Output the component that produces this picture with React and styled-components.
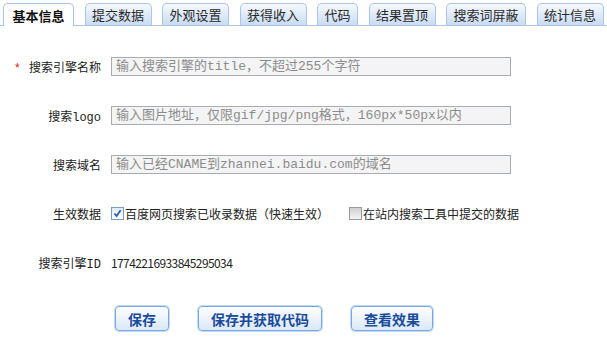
import React from "react";
import styled, { createGlobalStyle } from "styled-components";

const GlobalStyle = createGlobalStyle`
    body {
        margin: 0;
        background: #fff;
        font-family: "Noto Sans CJK SC", sans-serif;
        color: #333;
    }
`;

const tabs = ["基本信息", "提交数据", "外观设置", "获得收入", "代码", "结果置顶", "搜索词屏蔽", "统计信息"];

const CheckIcon = () => (
    <svg width="9" height="9" viewBox="0 0 9 9">
        <path d="M1.5 4.5 L3.6 7 L7.6 1.2" fill="none" stroke="#2a5fc1" strokeWidth="1.8" />
    </svg>
);

export default function App() {
    return (
        <Page>
            <GlobalStyle />
            <TabBar>
                {tabs.map((t, i) => (
                    <Tab key={t} active={i === 0}>{t}</Tab>
                ))}
            </TabBar>
            <Form>
                <Label><Star>*</Star>搜索引擎名称</Label>
                <Field placeholder="输入搜索引擎的title，不超过255个字符" />

                <Label>搜索logo</Label>
                <Field placeholder="输入图片地址，仅限gif/jpg/png格式，160px*50px以内" />

                <Label>搜索域名</Label>
                <Field placeholder="输入已经CNAME到zhannei.baidu.com的域名" />

                <Label>生效数据</Label>
                <Checks>
                    <CheckItem>
                        <Box checked><CheckIcon /></Box>
                        百度网页搜索已收录数据（快速生效）
                    </CheckItem>
                    <CheckItem>
                        <Box />
                        在站内搜索工具中提交的数据
                    </CheckItem>
                </Checks>

                <Label>搜索引擎ID</Label>
                <IdValue>17742216933845295034</IdValue>
            </Form>
            <Buttons>
                <Button>保存</Button>
                <Button>保存并获取代码</Button>
                <Button>查看效果</Button>
            </Buttons>
        </Page>
    );
}

const Page = styled.div`
    width: 607px;
    height: 356px;
    overflow: hidden;
`;

const TabBar = styled.div`
    display: flex;
    align-items: flex-end;
    gap: 10.5px;
    padding: 3px 0 0 3px;
    height: 22px;
    border-bottom: 1px solid #a9c6e8;
`;

const Tab = styled.div`
    display: flex;
    align-items: center;
    justify-content: center;
    box-sizing: border-box;
    height: ${(props) => (props.active ? "23px" : "22px")};
    margin-bottom: ${(props) => (props.active ? "-1px" : "0")};
    padding: ${(props) => (props.active ? "0 8.5px" : "0 6.5px")};
    border: 1px solid #a9c6e8;
    border-bottom: none;
    border-radius: 5px 5px 0 0;
    background: ${(props) => (props.active ? "#fff" : "linear-gradient(#f6f9fe, #c9dcf3)")};
    font-size: 13px;
    font-weight: ${(props) => (props.active ? "bold" : "normal")};
    color: ${(props) => (props.active ? "#111" : "#2a2a2a")};
    white-space: nowrap;
`;

const Form = styled.div`
    display: grid;
    grid-template-columns: 101px 400px;
    grid-auto-rows: 19px;
    column-gap: 10px;
    row-gap: 30px;
    align-items: center;
    padding-top: 31px;
`;

const Label = styled.div`
    text-align: right;
    font-family: "Liberation Mono", "Noto Sans CJK SC", monospace;
    font-size: 12px;
    color: #222;
    white-space: nowrap;
`;

const Star = styled.span`
    color: #e02020;
    margin-right: 8px;
`;

const Field = styled.input`
    box-sizing: border-box;
    width: 100%;
    height: 19px;
    padding: 0 4px;
    border: 1px solid #a8adb3;
    background: #f4f4f4;
    font-family: "Liberation Mono", "Noto Sans CJK SC", monospace;
    font-size: 13px;
    outline: none;
    &::placeholder {
        color: #8c8c8c;
    }
`;

const Checks = styled.div`
    display: flex;
    align-items: center;
    gap: 20px;
    white-space: nowrap;
`;

const CheckItem = styled.label`
    display: flex;
    align-items: center;
    gap: 1px;
    font-size: 12px;
    color: #222;
`;

const Box = styled.span`
    display: inline-flex;
    align-items: center;
    justify-content: center;
    box-sizing: border-box;
    width: 13px;
    height: 13px;
    border: 1px solid ${(props) => (props.checked ? "#7b9cc4" : "#9a9a9a")};
    background: ${(props) =>
        props.checked ? "linear-gradient(#e3ecf7, #fff)" : "linear-gradient(#cfcfcf, #f4f4f4)"};
`;

const IdValue = styled.div`
    font-size: 12px;
    letter-spacing: -0.6px;
    color: #222;
`;

const Buttons = styled.div`
    display: flex;
    gap: 29px;
    padding: 34px 0 0 115px;
`;

const Button = styled.button`
    height: 25px;
    padding: 0 12px;
    border: 1px solid #79a9e3;
    border-radius: 4px;
    box-shadow: 0 0 0 1px #c4dbf6;
    background: linear-gradient(#ffffff, #d9e8f8);
    font-family: "Noto Sans CJK SC", sans-serif;
    font-size: 14px;
    font-weight: bold;
    color: #1b4c9c;
    cursor: pointer;
`;
